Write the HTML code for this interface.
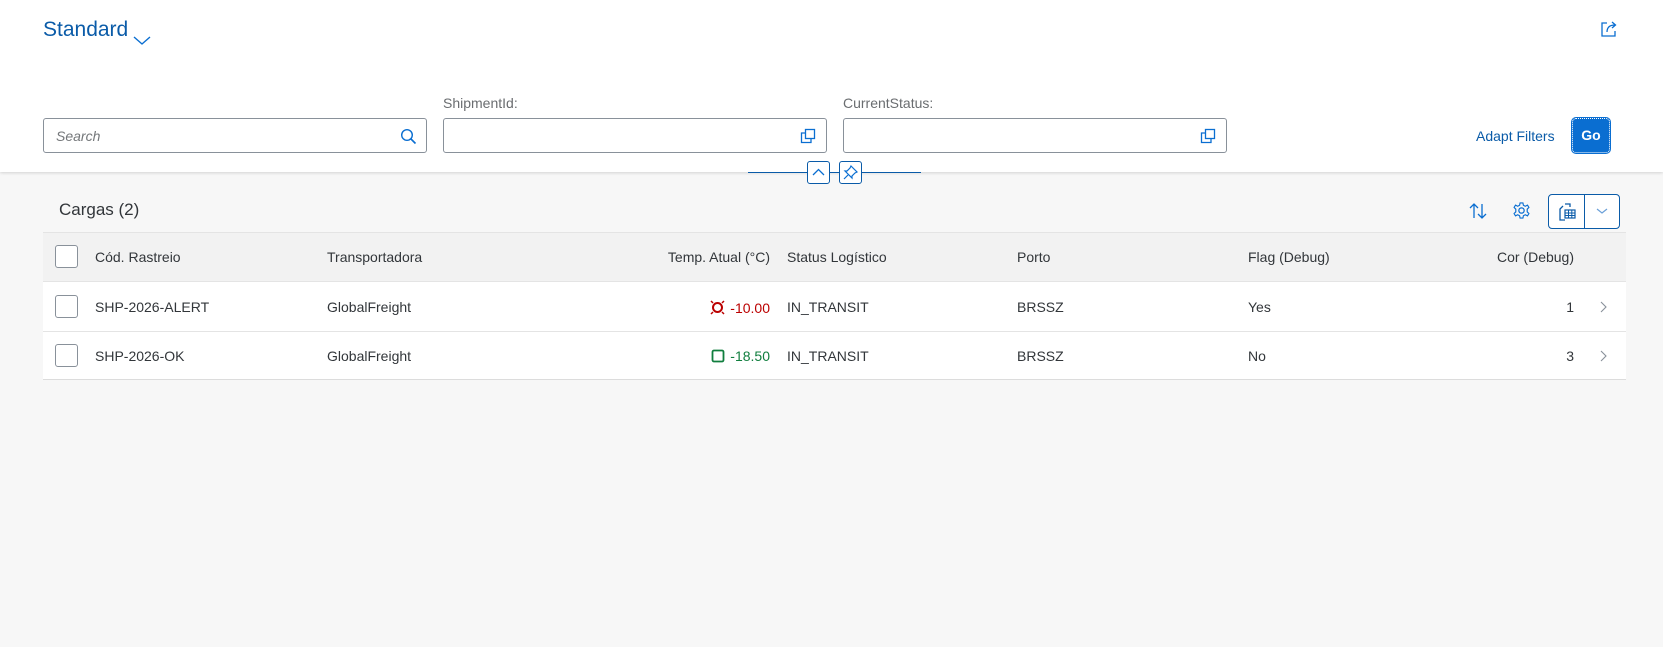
<!DOCTYPE html>
<html><head><meta charset="utf-8"><style>
*{box-sizing:border-box;margin:0;padding:0}
body{width:1663px;height:647px;overflow:hidden;background:#f7f7f7;font-family:"Liberation Sans",Arial,sans-serif;color:#32363a;position:relative}
.hdr{position:absolute;left:0;top:0;width:1663px;height:172px;background:#fff;box-shadow:0 1px 3px rgba(0,0,0,.15)}
.abs{position:absolute}
.inp{position:absolute;height:35px;border:1px solid #89919a;border-radius:3px;background:#fff}
.lbl{position:absolute;font-size:14px;color:#6a6d70}
.th,.td{position:absolute;font-size:14px;white-space:nowrap}
.cb{position:absolute;left:55px;width:23px;height:23px;border:1px solid #89919a;border-radius:3px;background:#fff}
.line{position:absolute;left:43px;width:1583px;height:1px;background:#e4e4e4}
</style></head><body>
<div class="hdr">
  <div class="abs" style="left:43px;top:18px;font-size:21px;color:#0a5ba8">Standard</div>
  <svg class="abs" style="left:132px;top:35px" width="20" height="12" viewBox="0 0 20 12"><path d="M2 2 L10 9 L18 2" fill="none" stroke="#0a6ed1" stroke-width="1.4"/></svg>
  <svg class="abs" style="left:1600px;top:20px" width="18" height="18" viewBox="0 0 18 18"><path d="M7 3 H2 V16 H15 V11" fill="none" stroke="#0a6ed1" stroke-width="1.3"/><path d="M7 12 C7 7 10 5 15 5 M12 2 L15.5 5 L12 8" fill="none" stroke="#0a6ed1" stroke-width="1.3"/></svg>

  <div class="inp" style="left:43px;top:118px;width:384px"><span class="abs" style="left:12px;top:9px;font-size:14px;font-style:italic;color:#74777a">Search</span>
    <svg class="abs" style="right:9px;top:9px" width="17" height="17" viewBox="0 0 17 17"><circle cx="7" cy="7" r="5.3" fill="none" stroke="#0a6ed1" stroke-width="1.4"/><path d="M11 11 L15.5 15.5" stroke="#0a6ed1" stroke-width="1.6"/></svg></div>
  <div class="lbl" style="left:443px;top:95px">ShipmentId:</div>
  <div class="inp" style="left:443px;top:118px;width:384px"><svg class="abs" style="right:10px;top:9px" width="16" height="16" viewBox="0 0 16 16"><rect x="5.5" y="1.5" width="9" height="9" fill="none" stroke="#0a6ed1" stroke-width="1.3"/><path d="M5 5 H1.5 V14.5 H11 V11" fill="none" stroke="#0a6ed1" stroke-width="1.3"/></svg></div>
  <div class="lbl" style="left:843px;top:95px">CurrentStatus:</div>
  <div class="inp" style="left:843px;top:118px;width:384px"><svg class="abs" style="right:10px;top:9px" width="16" height="16" viewBox="0 0 16 16"><rect x="5.5" y="1.5" width="9" height="9" fill="none" stroke="#0a6ed1" stroke-width="1.3"/><path d="M5 5 H1.5 V14.5 H11 V11" fill="none" stroke="#0a6ed1" stroke-width="1.3"/></svg></div>
  <div class="abs" style="left:1476px;top:128px;font-size:14px;color:#0a5ba8">Adapt Filters</div>
  <div class="abs" style="left:1572px;top:118px;width:38px;height:35px;background:#0a6ed1;border-radius:4px;border:1px dotted #fff;outline:1px solid #0a6ed1;color:#fff;font-weight:bold;font-size:14px;text-align:center;line-height:33px">Go</div>
</div>
<div class="abs" style="left:748px;top:172px;width:173px;height:1px;background:#0a5ba8"></div>
<div class="abs" style="left:807px;top:161px;width:23px;height:23px;border:1px solid #0a5ba8;border-radius:3px;background:#fff"><svg width="21" height="21" viewBox="0 0 21 21"><path d="M5 13 L10.5 7.5 L16 13" fill="none" stroke="#0a6ed1" stroke-width="1.3"/></svg></div>
<div class="abs" style="left:839px;top:161px;width:23px;height:23px;border:1px solid #0a5ba8;border-radius:3px;background:#fff"><svg width="21" height="21" viewBox="0 0 21 21"><path d="M11 4 L17 10 L15 11 L12 14 L12 16 L5 9 L7 9 L10 6 Z M8 13 L4 17" fill="none" stroke="#0a6ed1" stroke-width="1.2"/></svg></div>

<div class="abs" style="left:59px;top:200px;font-size:17px">Cargas (2)</div>
<svg class="abs" style="left:1468px;top:201px" width="20" height="20" viewBox="0 0 20 20"><path d="M6 17 V3 M2 7 L6 3 L10 7 M14 3 V17 M10 13 L14 17 L18 13" fill="none" stroke="#0a6ed1" stroke-width="1.3"/></svg>
<svg class="abs" style="left:1512px;top:201px" width="19" height="19" viewBox="0 0 20 20"><circle cx="10" cy="10" r="2.8" fill="none" stroke="#0a6ed1" stroke-width="1.3"/><path d="M8.5 2 H11.5 L12 4.5 L14 5.5 L16.3 4.3 L17.8 6.8 L16 8.6 V11.4 L17.8 13.2 L16.3 15.7 L14 14.5 L12 15.5 L11.5 18 H8.5 L8 15.5 L6 14.5 L3.7 15.7 L2.2 13.2 L4 11.4 V8.6 L2.2 6.8 L3.7 4.3 L6 5.5 L8 4.5 Z" fill="none" stroke="#0a6ed1" stroke-width="1.2"/></svg>
<div class="abs" style="left:1548px;top:194px;width:72px;height:35px;border:1px solid #0a5ba8;border-radius:4px;background:#fff">
  <div class="abs" style="left:35px;top:0;width:1px;height:33px;background:#0a5ba8"></div>
  <svg class="abs" style="left:8px;top:7px" width="20" height="20" viewBox="0 0 20 20"><path d="M8 2 H13 V5 M6 4 L3 7 V18 H8" fill="none" stroke="#0a5ba8" stroke-width="1.3"/><rect x="8" y="8" width="10" height="8" fill="none" stroke="#0a5ba8" stroke-width="1.2"/><path d="M8 11 H18 M8 13.5 H18 M11.5 8 V16 M14.8 8 V16" stroke="#0a5ba8" stroke-width="1"/></svg>
  <svg class="abs" style="left:46px;top:11px" width="14" height="10" viewBox="0 0 14 10"><path d="M2 3 L7 7 L12 3" fill="none" stroke="#6a9fd8" stroke-width="1.2"/></svg>
</div>

<div class="abs" style="left:43px;top:232px;width:1583px;height:49px;background:#f2f2f2;border-top:1px solid #e4e4e4"></div>
<div class="abs" style="left:43px;top:281px;width:1583px;height:99px;background:#fff"></div>
<div class="line" style="top:281px"></div><div class="line" style="top:331px"></div><div class="line" style="top:379px;background:#dcdcdc"></div>

<div class="cb" style="top:245px"></div>
<div class="th" style="left:95px;top:249px">Cód. Rastreio</div>
<div class="th" style="left:327px;top:249px">Transportadora</div>
<div class="th" style="right:893px;top:249px">Temp. Atual (°C)</div>
<div class="th" style="left:787px;top:249px">Status Logístico</div>
<div class="th" style="left:1017px;top:249px">Porto</div>
<div class="th" style="left:1248px;top:249px">Flag (Debug)</div>
<div class="th" style="right:89px;top:249px">Cor (Debug)</div>

<div class="cb" style="top:295px"></div>
<div class="td" style="left:95px;top:299px">SHP-2026-ALERT</div>
<div class="td" style="left:327px;top:299px">GlobalFreight</div>
<div class="td" style="right:893px;top:299px;color:#bb0000"><svg style="vertical-align:-3px;margin-right:4px" width="17" height="17" viewBox="0 0 17 17"><circle cx="8.5" cy="8.5" r="4.5" fill="none" stroke="#bb0000" stroke-width="2"/><path d="M2 2 L4 4 M15 2 L13 4 M2 15 L4 13 M15 15 L13 13" stroke="#bb0000" stroke-width="1.5"/></svg>-10.00</div>
<div class="td" style="left:787px;top:299px">IN_TRANSIT</div>
<div class="td" style="left:1017px;top:299px">BRSSZ</div>
<div class="td" style="left:1248px;top:299px">Yes</div>
<div class="td" style="right:89px;top:299px">1</div>
<svg class="abs" style="left:1598px;top:300px" width="10" height="14" viewBox="0 0 10 14"><path d="M3 2 L8 7 L3 12" fill="none" stroke="#89919a" stroke-width="1.1"/></svg>

<div class="cb" style="top:344px"></div>
<div class="td" style="left:95px;top:348px">SHP-2026-OK</div>
<div class="td" style="left:327px;top:348px">GlobalFreight</div>
<div class="td" style="right:893px;top:348px;color:#107e3e"><svg style="vertical-align:-2px;margin-right:5px" width="14" height="14" viewBox="0 0 14 14"><rect x="1.5" y="1.5" width="11" height="11" rx="1.5" fill="none" stroke="#107e3e" stroke-width="1.8"/></svg>-18.50</div>
<div class="td" style="left:787px;top:348px">IN_TRANSIT</div>
<div class="td" style="left:1017px;top:348px">BRSSZ</div>
<div class="td" style="left:1248px;top:348px">No</div>
<div class="td" style="right:89px;top:348px">3</div>
<svg class="abs" style="left:1598px;top:349px" width="10" height="14" viewBox="0 0 10 14"><path d="M3 2 L8 7 L3 12" fill="none" stroke="#89919a" stroke-width="1.1"/></svg>
</body></html>
